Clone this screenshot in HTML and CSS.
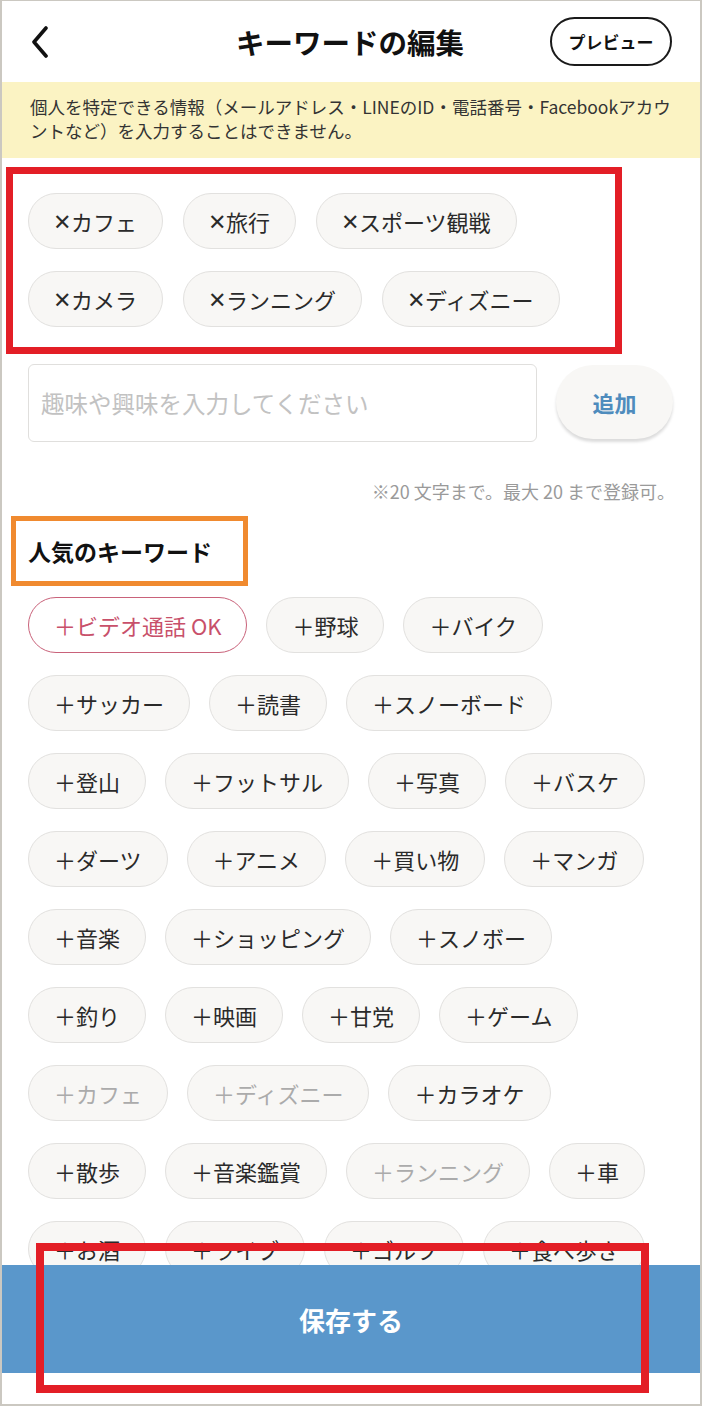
FILE: index.html
```html
<!DOCTYPE html>
<html lang="ja">
<head>
<meta charset="utf-8">
<title>キーワードの編集</title>
<link rel="stylesheet" href="styles.css">
</head>
<body>
<div class="frame">
  <header class="header">
    <button class="back" aria-label="戻る">
      <svg width="20" height="32" viewBox="0 0 20 32"><path d="M16 2 L4 16 L16 30" fill="none" stroke="#111" stroke-width="3.6" stroke-linecap="round" stroke-linejoin="round"/></svg>
    </button>
    <h1 class="title">キーワードの編集</h1>
    <button class="preview">プレビュー</button>
  </header>

  <div class="notice">個人を特定できる情報（メールアドレス・LINEのID・電話番号・Facebookアカウントなど）を入力することはできません。</div>

  <div class="selected-box">
    <div class="chips">
      <span class="chip sel"><span class="x">×</span>カフェ</span>
      <span class="chip sel"><span class="x">×</span>旅行</span>
      <span class="chip sel"><span class="x">×</span>スポーツ観戦</span>
      <span class="chip sel"><span class="x">×</span>カメラ</span>
      <span class="chip sel"><span class="x">×</span>ランニング</span>
      <span class="chip sel"><span class="x">×</span>ディズニー</span>
    </div>
  </div>

  <div class="input-row">
    <div class="input">趣味や興味を入力してください</div>
    <button class="add">追加</button>
  </div>
  <div class="note">※20 文字まで。最大 20 まで登録可。</div>

  <h2 class="popular-title">人気のキーワード</h2>

  <div class="chips popular">
    <span class="chip red">＋ビデオ通話 OK</span>
    <span class="chip">＋野球</span>
    <span class="chip">＋バイク</span>
    <span class="chip">＋サッカー</span>
    <span class="chip">＋読書</span>
    <span class="chip">＋スノーボード</span>
    <span class="chip">＋登山</span>
    <span class="chip">＋フットサル</span>
    <span class="chip">＋写真</span>
    <span class="chip">＋バスケ</span>
    <span class="chip">＋ダーツ</span>
    <span class="chip">＋アニメ</span>
    <span class="chip">＋買い物</span>
    <span class="chip">＋マンガ</span>
    <span class="chip">＋音楽</span>
    <span class="chip">＋ショッピング</span>
    <span class="chip">＋スノボー</span>
    <span class="chip">＋釣り</span>
    <span class="chip">＋映画</span>
    <span class="chip">＋甘党</span>
    <span class="chip">＋ゲーム</span>
    <span class="chip off">＋カフェ</span>
    <span class="chip off">＋ディズニー</span>
    <span class="chip">＋カラオケ</span>
    <span class="chip">＋散歩</span>
    <span class="chip">＋音楽鑑賞</span>
    <span class="chip off">＋ランニング</span>
    <span class="chip">＋車</span>
    <span class="chip">＋お酒</span>
    <span class="chip">＋ライブ</span>
    <span class="chip">＋ゴルフ</span>
    <span class="chip">＋食べ歩き</span>
    <span class="chip">＋温泉</span>
    <span class="chip">＋料理</span>
  </div>

  <div class="footer">
    <button class="save">保存する</button>
  </div>
  <div class="save-mark"></div>
</div>
</body>
</html>
```

FILE: styles.css
```css
* { box-sizing: border-box; }
html, body { margin: 0; padding: 0; background: #fff; }
body {
  font-family: "Noto Sans CJK JP", "Noto Sans", sans-serif;
  color: #222;
}
.frame {
  position: relative;
  width: 702px;
  height: 1406px;
  overflow: hidden;
  border-style: solid;
  border-color: #cbc8c1;
  border-width: 1px 2px 2px 2px;
  background: #fff;
}
button { font-family: inherit; }

.header {
  height: 81px;
  display: grid;
  grid-template-columns: 1fr auto 1fr;
  align-items: center;
  padding: 0 28px 0 26px;
}
.back {
  justify-self: start;
  border: 0;
  background: none;
  padding: 0;
  width: 24px;
  height: 34px;
  display: flex;
  align-items: center;
  justify-content: center;
}
.title {
  margin: 0;
  font-size: 28.5px;
  font-weight: 700;
  color: #111;
}
.preview {
  justify-self: end;
  width: 122px;
  height: 49px;
  border: 2px solid #1a1a1a;
  border-radius: 25px;
  background: #fff;
  font-size: 17px;
  font-weight: 700;
  color: #111;
  padding: 0;
}

.notice {
  background: #fbf3c3;
  height: 76px;
  padding: 13px 16px 0 28px;
  font-size: 17.5px;
  line-height: 24px;
  color: #333;
}

.selected-box {
  margin: 9px 0 0 4px;
  width: 616px;
  border: 7px solid #e31e26;
  padding: 19px 0 20px 15px;
}
.chips {
  display: flex;
  flex-wrap: wrap;
  gap: 22px 20px;
}
.chip {
  display: inline-flex;
  align-items: center;
  height: 56px;
  padding: 0 25px;
  border: 1.5px solid #e2e1df;
  border-radius: 28px;
  background: #f8f7f5;
  font-size: 22px;
  color: #2a2a2a;
  white-space: nowrap;
}
.x {
  display: inline-block;
  width: 17px;
  font-family: "Noto Sans", "DejaVu Sans", sans-serif;
  font-size: 29px;
  line-height: 1;
  text-align: left;
  margin-top: -2px;
}
.chip.red {
  background: #fff;
  border-color: #c9627a;
  color: #c8506a;
}
.chip.off { color: #ababab; }

.input-row {
  display: flex;
  gap: 19px;
  margin: 10px 0 0 26px;
  width: 646px;
  align-items: flex-start;
}
.input {
  width: 509px;
  height: 78px;
  border: 1.5px solid #e0dfdd;
  border-radius: 6px;
  padding: 0 12px;
  display: flex;
  align-items: center;
  font-size: 23.5px;
  color: #c2c2c2;
}
.add {
  width: 117px;
  height: 74px;
  margin-top: 1px;
  border: 0;
  border-radius: 37px;
  background: #f8f7f5;
  box-shadow: 0 3px 3px rgba(0,0,0,0.14);
  font-size: 22px;
  font-weight: 700;
  color: #4f8cbd;
  padding: 0;
}
.note {
  margin-top: 37px;
  text-align: right;
  padding-right: 25px;
  font-size: 18px;
  line-height: 24px;
  color: #9a9a9a;
}
.popular-title {
  margin: 13px 0 0 9px;
  width: 237px;
  height: 70px;
  border: 5px solid #f08a2f;
  padding: 0 0 0 12px;
  display: flex;
  align-items: center;
  font-size: 23px;
  font-weight: 700;
  color: #111;
}
.popular {
  margin: 11px 0 0 26px;
  width: 646px;
  gap: 22px 19px;
}

.footer {
  position: absolute;
  left: 0;
  right: 0;
  bottom: 0;
  height: 139px;
  background: #fff;
}
.save {
  display: block;
  width: 100%;
  height: 108px;
  border: 0;
  background: #5a97cb;
  color: #fff;
  font-size: 26px;
  font-weight: 700;
  padding: 0;
}
.save-mark {
  position: absolute;
  left: 34px;
  top: 1242px;
  width: 613px;
  height: 150px;
  border: 8px solid #e31e26;
}
```
